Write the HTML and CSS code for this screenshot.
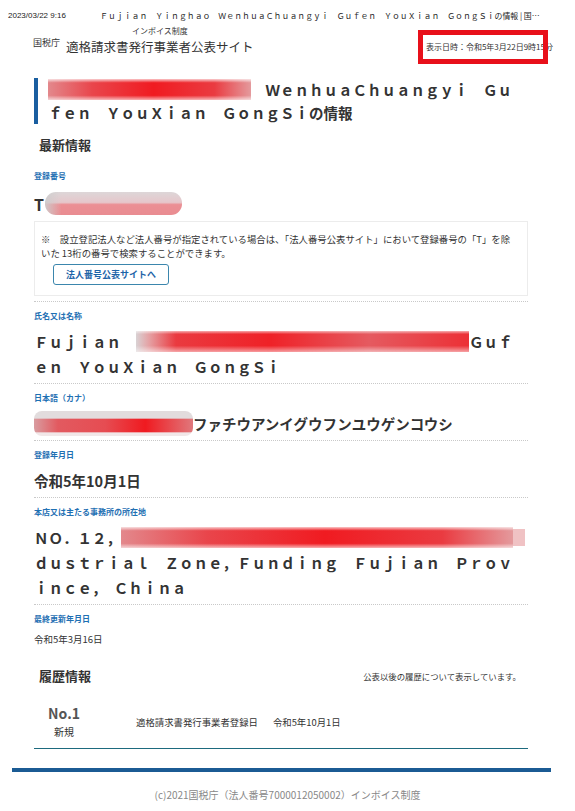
FILE: index.html
```html
<!DOCTYPE html>
<html lang="ja">
<head>
<meta charset="utf-8">
<title>Ｆｕｊｉａｎ　Ｙｉｎｇｈａｏ　ＷｅｎｈｕａＣｈｕａｎｇｙｉ　Ｇｕｆｅｎ　ＹｏｕＸｉａｎ　ＧｏｎｇＳｉの情報｜国税庁インボイス制度適格請求書発行事業者公表サイト</title>
<link rel="stylesheet" href="styles.css">
</head>
<body>
<div class="print-head">
  <span class="print-date">2023/03/22 9:16</span>
  <span class="print-title">Ｆｕｊｉａｎ　Ｙｉｎｇｈａｏ　ＷｅｎｈｕａＣｈｕａｎｇｙｉ　Ｇｕｆｅｎ　ＹｏｕＸｉａｎ　ＧｏｎｇＳｉの情報 | 国税庁インボイス制度適格請求書発行事業者公表サイト</span>
</div>

<header class="site-head">
  <div class="logo">
    <span class="agency">国税庁</span>
    <span class="site-name">
      <span class="site-sub">インボイス制度</span>
      <span class="site-main">適格請求書発行事業者公表サイト</span>
    </span>
  </div>
  <div class="timestamp">表示日時：令和5年3月22日9時15分</div>
  <div class="annot-box"></div>
</header>

<main class="content">
  <h1 class="page-title"><span class="redact r-title">Ｆｕｊｉａｎ　Ｙｉｎｇｈａｏ</span>　ＷｅｎｈｕａＣｈｕａｎｇｙｉ　Ｇｕｆｅｎ　ＹｏｕＸｉａｎ　ＧｏｎｇＳｉの情報</h1>

  <h2 class="section-title">最新情報</h2>

  <div class="fields">
    <div class="field field-first">
      <div class="label">登録番号</div>
      <div class="value-num">T<span class="redact r-num">0000000000000</span></div>
      <div class="note">
        <p>※　設立登記法人など法人番号が指定されている場合は、「法人番号公表サイト」において登録番号の「T」を除いた 13桁の番号で検索することができます。</p>
        <a class="btn" href="#">法人番号公表サイトへ</a>
      </div>
    </div>

    <div class="field">
      <div class="label">氏名又は名称</div>
      <div class="value-wide">Ｆｕｊｉａｎ　<span class="redact r-name">Ｙｉｎｇｈａｏ　ＷｅｎｈｕａＣｈｕａｎｇｙｉ　</span>Ｇｕｆｅｎ　ＹｏｕＸｉａｎ　ＧｏｎｇＳｉ</div>
    </div>

    <div class="field">
      <div class="label">日本語（カナ）</div>
      <div class="value-wide"><span class="redact r-kana">フジアンインハオウエン</span>ファチウアンイグウフンユウゲンコウシ</div>
    </div>

    <div class="field">
      <div class="label">登録年月日</div>
      <div class="value-wide">令和5年10月1日</div>
    </div>

    <div class="field">
      <div class="label">本店又は主たる事務所の所在地</div>
      <div class="value-wide">ＮＯ．１２，<span class="redact r-addr">ＸＸＸＸＸＸＸＸＸＸＸＸＸＸＸＸＸＸＸＸＸＸＸＸＸＩｎ</span>ｄｕｓｔｒｉａｌ　Ｚｏｎｅ，Ｆｕｎｄｉｎｇ　Ｆｕｊｉａｎ　Ｐｒｏｖｉｎｃｅ，　Ｃｈｉｎａ</div>
    </div>

    <div class="field field-last">
      <div class="label">最終更新年月日</div>
      <div class="value-plain">令和5年3月16日</div>
    </div>
  </div>

  <div class="history-head">
    <h2 class="section-title">履歴情報</h2>
    <span class="history-note">公表以後の履歴について表示しています。</span>
  </div>

  <div class="history-row">
    <div class="history-no">
      <span class="no">No.1</span>
      <span class="kind">新規</span>
    </div>
    <div class="history-detail">
      <span>適格請求書発行事業者登録日</span>
      <span>令和5年10月1日</span>
    </div>
  </div>
</main>

<footer class="site-foot">
  <div class="foot-bar"></div>
  <p class="copyright">(c)2021国税庁（法人番号7000012050002）インボイス制度</p>
</footer>
</body>
</html>
```

FILE: styles.css
```css
* {
  box-sizing: border-box;
}

body {
  margin: 0;
  width: 575px;
  background: #fff;
  color: #333;
  font-family: "Noto Sans CJK JP", "Noto Sans", sans-serif;
}

/* print header */
.print-head {
  display: flex;
  align-items: center;
  height: 21px;
  padding: 11px 30px 0 8px;
  font-size: 7.9px;
  line-height: 10px;
  color: #222;
}

.print-date {
  flex: none;
  width: 92px;
  font-family: "Liberation Sans", sans-serif;
  font-size: 8px;
}

.print-title {
  flex: 1;
  min-width: 0;
  white-space: nowrap;
  overflow: hidden;
  text-overflow: ellipsis;
}

/* site header */
.site-head {
  position: relative;
  display: flex;
  align-items: flex-end;
  height: 33px;
  padding: 0 22px 0 33px;
}

.logo {
  display: flex;
  align-items: flex-end;
  gap: 6px;
}

.agency {
  font-size: 9px;
  line-height: 11px;
  margin-bottom: 6px;
}

.site-name {
  display: flex;
  flex-direction: column;
  align-items: center;
}

.site-sub {
  font-size: 8px;
  line-height: 10px;
}

.site-main {
  font-size: 12.5px;
  line-height: 15px;
  margin-top: 3px;
}

.timestamp {
  margin-left: auto;
  margin-bottom: 2px;
  font-size: 8px;
  line-height: 10px;
  white-space: nowrap;
}

.annot-box {
  position: absolute;
  left: 418px;
  top: 9px;
  width: 130px;
  height: 34px;
  border: 5px solid #e8101a;
}

/* content */
.content {
  margin: 0 47px 0 34px;
}

.page-title {
  margin: 24px 0 0;
  padding: 0 10px;
  border-left: 4px solid #1a5ea0;
  font-size: 14.5px;
  line-height: 23px;
  font-weight: bold;
  color: #333;
}

.section-title {
  margin: 13px 0 0;
  padding-left: 5px;
  font-size: 13px;
  line-height: 16px;
  font-weight: bold;
  color: #333;
}

.fields {
  margin-top: 17px;
}

.field {
  padding: 8px 0 4px;
  border-bottom: 1px dotted #c9c9c9;
}

.field-first {
  padding: 0 0 5px;
}

.field-last {
  border-bottom: none;
}

.label {
  font-size: 8px;
  line-height: 12px;
  font-weight: bold;
  color: #1f70b3;
}

.value-num {
  margin-top: 10px;
  font-size: 16px;
  line-height: 24px;
  font-weight: bold;
  color: #333;
}

.value-wide {
  margin-top: 7px;
  padding-right: 8px;
  font-size: 14.5px;
  line-height: 25px;
  font-weight: bold;
  color: #333;
}

.value-plain {
  margin-top: 7px;
  font-size: 9.5px;
  line-height: 14px;
  color: #333;
}

.note {
  margin-top: 5px;
  padding: 10px 14px 10px 6px;
  border: 1px solid #ececec;
  font-size: 9.4px;
  line-height: 14px;
  color: #333;
}

.note p {
  margin: 0;
}

.btn {
  display: inline-block;
  margin: 4px 0 0 12px;
  height: 21px;
  padding: 0 12px;
  border: 1px solid #3b86ad;
  border-radius: 3px;
  font-size: 9px;
  line-height: 19px;
  font-weight: bold;
  color: #1d64a8;
  text-decoration: none;
}

/* redaction marks */
.redact {
  color: transparent;
  filter: blur(0.6px);
}

.r-title,
.r-name,
.r-addr {
  background:
    linear-gradient(180deg, rgba(255,255,255,0.75) 0%, rgba(255,255,255,0) 18%, rgba(255,255,255,0) 78%, rgba(255,255,255,0.65) 100%),
    linear-gradient(90deg, #e3888c 0%, #e9454b 22%, #f01b21 52%, #ea3b41 82%, #e49a9d 100%);
}

.r-name {
  background:
    linear-gradient(180deg, rgba(255,255,255,0.6) 0%, rgba(255,255,255,0) 15%, rgba(255,255,255,0) 70%, rgba(255,255,255,0.55) 100%),
    linear-gradient(90deg, #d9d2d4 0%, #e5a0a3 4%, #ea3a40 12%, #ef2127 40%, #e55a60 70%, #ec3036 100%);
}

.r-addr {
  box-shadow: 14px 0 0 -2px #f0c2c4;
}

.r-num {
  display: inline-block;
  vertical-align: top;
  width: 137px;
  height: 23px;
  margin-left: 1px;
  overflow: hidden;
  border-radius: 11px;
  background:
    linear-gradient(90deg, rgba(205,205,205,0.9) 0%, rgba(205,205,205,0) 12%),
    linear-gradient(180deg, #ddd6d8 0%, #e6c7cb 45%, #eb8f94 55%, #e98c91 100%);
}

.r-kana {
  display: inline-block;
  vertical-align: top;
  height: 25px;
  border-radius: 8px;
  background:
    linear-gradient(180deg, #e2dcdd 0%, #e2dcdd 28%, rgba(255,255,255,0) 34%, rgba(255,255,255,0) 82%, #f1e7e8 88%, #f1e7e8 100%),
    linear-gradient(90deg, #d99ca0 0%, #e25a60 15%, #e64c52 45%, #f01a20 70%, #e0787c 100%);
}

/* history */
.history-head {
  display: flex;
  justify-content: space-between;
  align-items: center;
  margin-top: 18px;
  padding-right: 7px;
}

.history-head .section-title {
  margin: 0;
}

.history-note {
  font-size: 8.4px;
  line-height: 12px;
}

.history-row {
  display: flex;
  align-items: center;
  padding: 20px 0 9px;
  border-bottom: 1px solid #1d6a7e;
}

.history-no {
  display: flex;
  flex-direction: column;
  align-items: center;
  width: 60px;
}

.no {
  font-size: 14px;
  line-height: 18px;
  font-weight: bold;
  color: #555;
}

.kind {
  margin-top: 3px;
  font-size: 10px;
  line-height: 14px;
}

.history-detail {
  display: flex;
  gap: 15px;
  margin-left: 42px;
  font-size: 9.4px;
  line-height: 14px;
}

/* footer */
.site-foot {
  margin-top: 19px;
}

.foot-bar {
  height: 4px;
  margin: 0 24px 0 12px;
  background: #1b5b94;
}

.copyright {
  margin: 16px 0 0;
  text-align: center;
  font-size: 10px;
  line-height: 14px;
  color: #888;
}
```
